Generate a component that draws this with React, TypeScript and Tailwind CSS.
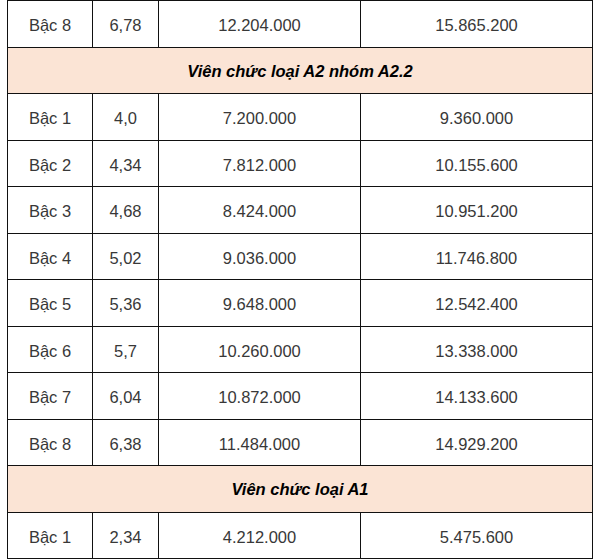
import React from "react";

type Row =
  | { kind: "data"; a: string; b: string; c: string; d: string }
  | { kind: "head"; t: string };

const rows: Row[] = [
  { kind: "data", a: "Bậc 8", b: "6,78", c: "12.204.000", d: "15.865.200" },
  { kind: "head", t: "Viên chức loại A2 nhóm A2.2" },
  { kind: "data", a: "Bậc 1", b: "4,0", c: "7.200.000", d: "9.360.000" },
  { kind: "data", a: "Bậc 2", b: "4,34", c: "7.812.000", d: "10.155.600" },
  { kind: "data", a: "Bậc 3", b: "4,68", c: "8.424.000", d: "10.951.200" },
  { kind: "data", a: "Bậc 4", b: "5,02", c: "9.036.000", d: "11.746.800" },
  { kind: "data", a: "Bậc 5", b: "5,36", c: "9.648.000", d: "12.542.400" },
  { kind: "data", a: "Bậc 6", b: "5,7", c: "10.260.000", d: "13.338.000" },
  { kind: "data", a: "Bậc 7", b: "6,04", c: "10.872.000", d: "14.133.600" },
  { kind: "data", a: "Bậc 8", b: "6,38", c: "11.484.000", d: "14.929.200" },
  { kind: "head", t: "Viên chức loại A1" },
  { kind: "data", a: "Bậc 1", b: "2,34", c: "4.212.000", d: "5.475.600" },
];

const heights = [47, 46, 47, 46, 47, 46, 47, 46, 47, 46, 47, 46];

export default function App() {
  return (
    <div
      className="w-[598px] h-[559px] bg-white overflow-hidden pl-[7px] text-[16.5px] text-[#383838]"
      style={{ fontFamily: '"Liberation Sans", Arial, sans-serif' }}
    >
      <div className="w-[586px] border-t border-l border-r border-[#111]">
        {rows.map((r, i) =>
          r.kind === "data" ? (
            <div
              key={i}
              className="flex border-b border-[#111]"
              style={{ height: heights[i] }}
            >
              <div className="w-[85px] flex items-center justify-center pt-[3px] border-r border-[#111]">
                {r.a}
              </div>
              <div className="w-[66px] flex items-center justify-center pt-[3px] border-r border-[#111]">
                {r.b}
              </div>
              <div className="w-[202px] flex items-center justify-center pt-[3px] border-r border-[#111]">
                {r.c}
              </div>
              <div className="flex-1 flex items-center justify-center pt-[3px]">{r.d}</div>
            </div>
          ) : (
            <div
              key={i}
              className="flex items-center justify-center pt-[1px] border-b border-[#111] bg-[#fbe4d5] font-bold italic text-black"
              style={{ height: heights[i] }}
            >
              {r.t}
            </div>
          )
        )}
      </div>
    </div>
  );
}
